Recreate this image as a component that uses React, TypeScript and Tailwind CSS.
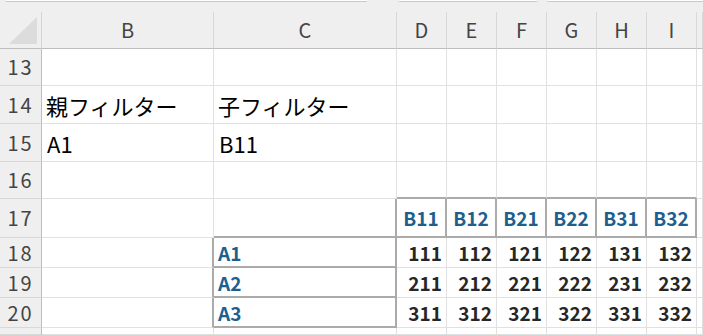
import React from 'react';

// Excel-like sheet fragment: rows 13–21, columns B–J
const COLS = ['B', 'C', 'D', 'E', 'F', 'G', 'H', 'I', ''];
const ROWS: { n: number; h: string }[] = [
  { n: 13, h: 'h-[37px]' },
  { n: 14, h: 'h-[38px]' },
  { n: 15, h: 'h-[38px]' },
  { n: 16, h: 'h-[37px]' },
  { n: 17, h: 'h-[39px]' },
  { n: 18, h: 'h-[30px]' },
  { n: 19, h: 'h-[30px]' },
  { n: 20, h: 'h-[30px]' },
  { n: 21, h: 'h-[7px]' },
];
const KEYS = ['B11', 'B12', 'B21', 'B22', 'B31', 'B32'];

const LIGHT = 'border-r border-b border-[#e1e1e1]';
const TOP_OF_BOX = 'border-r border-r-[#e1e1e1] border-b-2 border-b-[#ababab]';
const BOX = 'border-r-2 border-b-2 border-[#ababab]';
const LEFT_OF_BOX = 'border-r-2 border-r-[#ababab] border-b border-b-[#e1e1e1]';

function borderFor(r: number, c: number) {
  const table = c >= 2 && c <= 7;
  if (r === 16 && table) return TOP_OF_BOX;
  if (r === 17 && (c === 1 || table)) return BOX;
  if (r >= 18 && r <= 20 && c === 0) return LEFT_OF_BOX;
  if (r >= 18 && r <= 20 && c === 1) return BOX;
  return LIGHT;
}

function content(r: number, c: number): React.ReactNode {
  if (r === 14 && c === 0) return <span className="pl-[4px] text-[22px] text-black">親フィルター</span>;
  if (r === 14 && c === 1) return <span className="pl-[4px] text-[22px] text-black">子フィルター</span>;
  if (r === 15 && c === 0) return <span className="pl-[5px] text-[22px] text-black">A1</span>;
  if (r === 15 && c === 1) return <span className="pl-[5px] text-[22px] text-black">B11</span>;
  if (r === 17 && c >= 2 && c <= 7)
    return <span className="w-full text-center text-[19px] font-bold text-[#1e5f8e]">{KEYS[c - 2]}</span>;
  if (r >= 18 && r <= 20 && c === 1)
    return <span className="pl-[4px] text-[19px] font-bold text-[#1e5f8e]">A{r - 17}</span>;
  if (r >= 18 && r <= 20 && c >= 2 && c <= 7) {
    const k = KEYS[c - 2];
    return (
      <span className="w-full pr-[4px] text-right text-[19px] font-bold text-[#262626]">
        {r - 17}
        {k.slice(1)}
      </span>
    );
  }
  return null;
}

export default function App() {
  return (
    <div className="w-[703px] h-[335px] overflow-hidden bg-white font-['Noto_Sans_CJK_JP',sans-serif] leading-none">
      {/* formula bar remnants */}
      <div className="h-[12px] bg-[#efefef] flex items-start">
        <div className="ml-[5px] w-[362px] h-[2px] bg-white border-b border-[#c8c8c8] rounded-bl-[3px]" />
        <div className="ml-[31px] w-[140px] h-[2px] bg-white border-b border-[#c8c8c8] rounded-b-[3px]" />
        <div className="ml-[9px] flex-1 h-[2px] bg-white border-b border-[#c8c8c8] rounded-bl-[3px]" />
      </div>

      <div className="grid grid-cols-[42px_172px_183px_repeat(6,50px)_6px]">
        {/* column header */}
        <div className="h-[37px] bg-[#efefef] border-r border-b border-r-[#d4d4d4] border-b-[#bdbdbd] flex items-end justify-end pr-[3px] pb-[3px]">
          <svg width="29" height="28" viewBox="0 0 29 28">
            <polygon points="28,0 28,27 0,27" fill="#dcdcdc" />
          </svg>
        </div>
        {COLS.map((c, i) => (
          <div
            key={i}
            className="h-[37px] bg-[#efefef] border-r border-b border-r-[#d8d8d8] border-b-[#bdbdbd] flex items-center justify-center text-[20px] text-[#444]"
          >
            {c}
          </div>
        ))}

        {/* body rows */}
        {ROWS.map((row) => (
          <React.Fragment key={row.n}>
            <div
              className={`${row.h} bg-[#efefef] border-r border-b border-r-[#bdbdbd] border-b-[#d8d8d8] flex items-center justify-center text-[20px] tracking-[2px] text-[#444]`}
            >
              {row.n < 21 ? row.n : ''}
            </div>
            {COLS.map((_, c) => (
              <div key={c} className={`${row.h} ${borderFor(row.n, c)} flex items-center overflow-hidden whitespace-nowrap`}>
                {content(row.n, c)}
              </div>
            ))}
          </React.Fragment>
        ))}
      </div>
    </div>
  );
}
